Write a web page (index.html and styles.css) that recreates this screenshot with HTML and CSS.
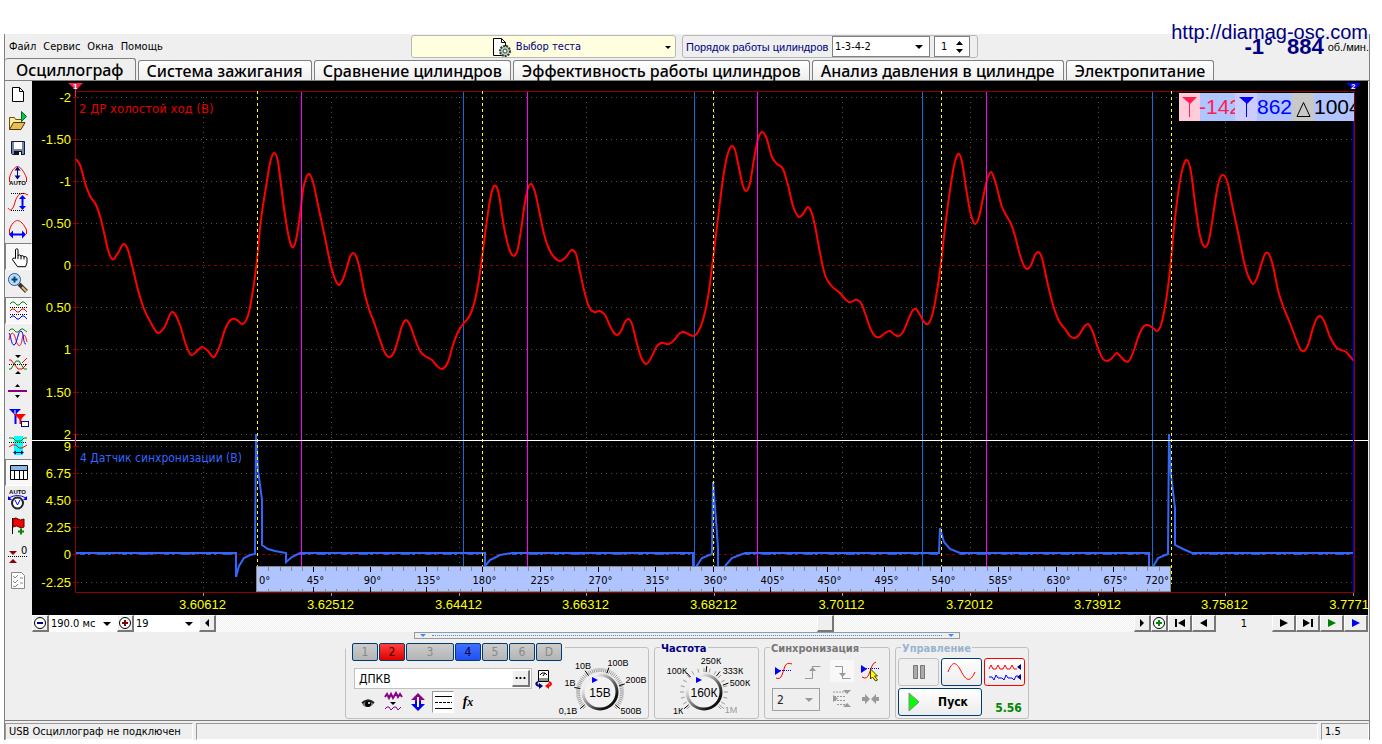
FILE: index.html
```html
<!DOCTYPE html>
<html lang="ru">
<head>
<meta charset="utf-8">
<title>USB Осциллограф</title>
<link rel="stylesheet" href="styles.css">
</head>
<body>
<div class="window">
  <a class="site" href="#">http://diamag-osc.com</a>
  <header class="top">
    <nav class="menu"><a href="#">Файл</a><a href="#">Сервис</a><a href="#">Окна</a><a href="#">Помощь</a></nav>
    <button class="test">
      <svg width="20" height="20" viewBox="0 0 20 20"><path d="M1.500 1.500h8l4 4v13h-12z" fill="#fff" stroke="#000"/><path d="M9.500 1.500v4h4" fill="none" stroke="#000"/><circle cx="13" cy="14" r="5" fill="#b9d0b4" stroke="#2c3c2c" stroke-width="2" stroke-dasharray="2 1"/><circle cx="13" cy="14" r="2" fill="#fff" stroke="#345"/></svg>
      <span>Выбор теста</span><i class="tri"></i>
    </button>
    <div class="order">
      <label for="order">Порядок работы цилиндров</label>
      <span class="pick order-pick"><select id="order"><option>1-3-4-2</option></select></span>
      <span class="spin"><input aria-label="Цилиндр" value="1"><svg width="9" height="14" viewBox="0 0 9 14"><path d="M1 5L4.500 1L8 5zM1 9L4.500 13L8 9z"/></svg></span>
    </div>
    <div class="rpm"><b>-1°</b><b>884</b><span>об./мин.</span></div>
  </header>
  <div class="tabs" role="tablist">
    <button class="tab active" role="tab">Осциллограф</button><button class="tab" role="tab">Система зажигания</button><button class="tab" role="tab">Сравнение цилиндров</button><button class="tab" role="tab">Эффективность работы цилиндров</button><button class="tab" role="tab">Анализ давления в цилиндре</button><button class="tab" role="tab">Электропитание</button>
  </div>
  <main class="main">
    <aside class="tools">
      <button aria-label="Новый"><svg viewBox="1 0 27 27"><path d="M8.500 6.500h7l4 4v10h-11z" fill="#fff" stroke="#000"/><path d="M15.500 6.500v4h4" fill="none" stroke="#000"/></svg></button>
      <button aria-label="Открыть"><svg viewBox="1 0 27 27"><path d="M5.500 21.500v-12h5l1 2h6v3" fill="#ffe9a0" stroke="#6b5200"/><path d="M5.500 21.500l4-7h11.500l-4 7z" fill="#e8bd58" stroke="#4a3800"/><path d="M17.500 3.500l5 5l-5 5z" fill="#0c3" stroke="#063"/></svg></button>
      <button aria-label="Сохранить"><svg viewBox="1 0 27 27"><path d="M7.500 6.500h13v13h-12l-1-1z" fill="#7285ad" stroke="#111a3a"/><path d="M10 7h8v7h-8z" fill="#fff"/><path d="M10 16h8v4h-8z" fill="#111"/><path d="M15 17h2v3h-2z" fill="#fff"/></svg></button>
      <button aria-label="Авто масштаб"><svg viewBox="1 0 27 27"><path d="M5.500 20v-4C7 9 11 4.500 13.500 4.500S20 9 22.500 16v4" class="r"/><path d="M13.500 6v11" stroke="#008"/><path d="M10.500 8.500l3-4l3 4zM10.500 13.500l3 4l3-4z" fill="#008"/><text x="13.500" y="23" class="auto">AUTO</text></svg></button>
      <button aria-label="Масштаб по вертикали"><svg viewBox="1 0 27 27"><path d="M4 19c3 5 6-1 7-6c2-7 6-11 13-7" class="r"/><path d="M7 4.500h14M7 21.500h14" class="dot"/><path d="M18.500 8v11" stroke="#00f" stroke-width="2"/><path d="M15 10l3.500-4l3.500 4zM15 17l3.500 4l3.500-4z" fill="#00f"/></svg></button>
      <button aria-label="Масштаб по горизонтали"><svg viewBox="1 0 27 27"><path d="M5.500 18v-4C7 8 11 4.500 13.500 4.500S20 8 22.500 14v4" class="r"/><path d="M7 18.500h13" stroke="#00f" stroke-width="2"/><path d="M5 18.500l4-4v8zM22 18.500l-4-4v8z" fill="#00f"/></svg></button>
      <button class="on" aria-label="Рука"><svg viewBox="1 0 27 27"><path d="M11.500 15.500v-9q1.500-1.500 2.500 0v6q2-1.500 3 .5q2-1 3 .7q2-.5 3 1v5l-1.500 4h-8l-5-7q0-2 2-1.500z" fill="#fff" stroke="#000"/><path d="M14 12v4M17 12.500v4M20 13.500v3" stroke="#000"/></svg></button>
      <button aria-label="Увеличить"><svg viewBox="1 0 27 27"><path d="M15 14l7.500 7.500" stroke="#333" stroke-width="4"/><path d="M18 17l4.500 4.500" stroke="#e0c060" stroke-width="2"/><circle cx="10.500" cy="9.500" r="6" fill="#b8dcff" stroke="#335a8c"/><path d="M7.500 9.500h6M10.500 6.500v6" stroke="#046" stroke-width="2"/></svg></button>
      <button class="on" aria-label="Раздельно"><svg viewBox="1 0 27 27"><path d="M6 7l2-2h2l3 3h2l3-3h2l3 3" class="g"/><path d="M6 14l2-2h2l3 3h2l3-3h2l3 3" class="r"/><path d="M6 21l2-2h2l3 3h2l3-3h2l3 3" class="b"/><path d="M6 10.500h18M6 17.500h18" class="dot"/></svg></button>
      <button aria-label="Совместно"><svg viewBox="1 0 27 27"><path d="M5 7l2-2h2l3 3h2l3-3h2l4 3" class="g"/><path d="M5 16c2-10 5-8 7 0s5 7 6 0s3-7 5 2" class="r"/><path d="M5 9c2 2 2 12 5 12s4-15 7-14s2 14 5 13" class="b"/></svg></button>
      <button aria-label="Центр"><svg viewBox="1 0 27 27"><path d="M5 9h2l7 9h4l5-5" class="r"/><path d="M5 18h2l5-8h3l5 8h3" class="g"/><path d="M5 13.500h18" class="dot"/><path d="M11 4h6l-3 3zM11 23h6l-3-3z"/><path d="M18 12l5-5" class="r"/></svg></button>
      <button aria-label="Разделитель"><svg viewBox="1 0 27 27"><path d="M4 13h19" stroke="#808" stroke-width="2"/><path d="M11 9h5l-2.500-3zM11 17h5l-2.500 3z"/></svg></button>
      <button aria-label="Маркеры"><svg viewBox="1 0 27 27"><path d="M5 4h12l-6 6z" fill="#00f"/><path d="M11.500 5v14" stroke="#00f" stroke-width="2"/><path d="M10 9h12l-6 6z" fill="#f00"/><path d="M16.500 10v9" stroke="#f00" stroke-width="2"/><path d="M11 5v4" stroke="#fff"/><rect x="17.500" y="16.500" width="7" height="5" fill="#fff" stroke="#008"/></svg></button>
      <button aria-label="Область"><svg viewBox="1 0 27 27"><path d="M10 4h9v19h-9z" fill="#0ff"/><path d="M5 6h4l3 3h5l3-3h3" class="g"/><path d="M5 15l3-2h4l3 3h3l5-3" class="r"/><path d="M5 10.500h18" class="dot"/><path d="M10 20.500h9" stroke="#008"/><path d="M9 20.500l3-2v4zM20 20.500l-3-2v4z" fill="#008"/></svg></button>
      <button class="on" aria-label="Таблица"><svg viewBox="1 0 27 27"><path d="M6.500 6.500h17v14h-17z" fill="#fff" stroke="#000"/><path d="M7 7h16v4h-16z" fill="#8cb8e8"/><path d="M6 11.500h18M10.500 11v9M15.500 11v9M19.500 11v9" stroke="#000"/></svg></button>
      <button aria-label="Авто вольт"><svg viewBox="1 0 27 27"><text x="13.500" y="8" class="auto">AUTO</text><circle cx="13.500" cy="17" r="5.500" fill="#fff" stroke="#222" stroke-width="2"/><path d="M11 14l2.500 5l2.500-5M5 12q8-5 17 0" class="b"/><path d="M4 10v4h4zM23 10v4h-4z" fill="#00f"/></svg></button>
      <button aria-label="Флаг"><svg viewBox="1 0 27 27"><path d="M8.500 5v16" stroke="#000"/><path d="M9 6q3-2 5 0t6 0v8q-3 2-5 0t-6 0z" fill="#e00" stroke="#600"/><path d="M14 18.500h6M17 15.500v6" stroke="#080" stroke-width="2"/></svg></button>
      <button aria-label="Ноль"><svg viewBox="1 0 27 27"><path d="M5 11h8l-4 4zM5 23h8l-4-4z" fill="#800"/><path d="M4 16.500h20" class="dot"/><text x="17" y="14" font-size="11">0</text></svg></button>
      <button aria-label="Список"><svg viewBox="1 0 27 27"><path d="M7.500 5.500h10l3 3v13h-13z" fill="#fff" stroke="#888"/><path d="M9 9l2 2l3-3M9 14l2 2l3-3M9 19l2 1l3-3M16 11h3M16 16h3" fill="none" stroke="#888"/></svg></button>
    </aside>
    <section class="view">
      <svg class="chart" id="chart" viewBox="32 81 1336 534" role="img" aria-label="Осциллограмма"></svg>
      <div class="scroll">
        <button class="sq" aria-label="Меньше"><svg width="14" height="14"><circle cx="7" cy="7" r="5.500" fill="#fff" stroke="#000"/><path d="M4 7h6" stroke="#008" stroke-width="2"/></svg></button>
        <span class="pick time"><select aria-label="Развёртка"><option>190.0 мс</option></select></span>
        <button class="sq" aria-label="Больше"><svg width="14" height="14"><circle cx="7" cy="7" r="5.500" fill="#fff" stroke="#000"/><path d="M4 7h6M7 4v6" stroke="#800" stroke-width="2"/></svg></button>
        <span class="pick count"><select aria-label="Делений"><option>19</option></select></span>
        <button class="sq" aria-label="Влево"><svg width="6" height="8"><path d="M5 0v8L1 4z"/></svg></button>
        <div class="track"><div class="gap-left"></div><div class="thumb"></div></div>
        <button class="sq" aria-label="Вправо"><svg width="6" height="8"><path d="M1 0v8l4-4z"/></svg></button>
        <button class="sq" aria-label="Добавить"><svg width="14" height="14"><circle cx="7" cy="7" r="5.500" fill="#fff" stroke="#000"/><path d="M4 7h6M7 4v6" stroke="#080" stroke-width="2"/></svg></button>
        <button class="wide" aria-label="В начало"><svg width="12" height="8"><path d="M1 0h2v8h-2zM11 0v8L4 4z"/></svg></button>
        <button class="wide" aria-label="Назад"><svg width="12" height="8"><path d="M9 0v8L2 4z"/></svg></button>
        <output class="page">1</output>
        <button class="wide" aria-label="Вперёд"><svg width="12" height="8"><path d="M2 0v8l8-4z"/></svg></button>
        <button class="wide" aria-label="В конец"><svg width="12" height="8"><path d="M1 0v8l7-4zM9 0h2v8h-2z"/></svg></button>
        <button class="wide" aria-label="Воспроизвести"><svg width="12" height="8"><path d="M2 0v8l8-4z" fill="#008000"/></svg></button>
        <button class="wide" aria-label="Старт"><svg width="12" height="8"><path d="M2 0v8l8-4z" fill="#00f"/></svg></button>
      </div>
    </section>
  </main>
  <div class="splitter"><i></i><span></span><i></i></div>
  <div class="panels">
    <section class="group channels">
      <div class="chan"><button>1</button><button class="red">2</button><button class="big">3</button><button class="blue">4</button><button>5</button><button>6</button><button>D</button></div>
      <div class="chan-body">
        <div class="chan-left">
          <div class="row"><div class="field"><input aria-label="Датчик" value="ДПКВ"><button>...</button></div>
            <button class="plain" aria-label="Заменить"><svg width="20" height="20"><path d="M4.500 1.500h10v11h-10z" fill="#fff" stroke="#000"/><path d="M5 9h9v3h-9z" fill="#8a9a8a"/><path d="M6 6l2-2h3l2 2M9 7l2-3" fill="none" stroke="#000"/><path d="M4 13q-4 2 1 4" fill="none" stroke="#008" stroke-width="2"/><path d="M5 14v6l4-3z" fill="#008"/><path d="M15 13q4 2 0 4" fill="none" stroke="#f00" stroke-width="2"/><path d="M15 14v6l-4-3z" fill="#f00"/></svg></button></div>
          <div class="icons">
            <button class="plain" aria-label="Видимость"><svg width="22" height="22"><path d="M5 12q6-7 12-1q-1 5-7 5q-4 0-5-4z" fill="#777"/><path d="M5 12q6-5 12 0" fill="none" stroke="#222" stroke-width="2"/><circle cx="11" cy="13" r="3"/><circle cx="12" cy="12" r="1" fill="#fff"/></svg></button>
            <button class="plain" aria-label="Фильтр"><svg width="22" height="22"><path d="M3 6l2-3l2 4l2-4l2 4l3-5l2 4l2-3l2 3" fill="none" stroke="#808" stroke-width="2"/><path d="M8 11h6l-3 3z"/><path d="M3 18l2-2h2l2 3l3-3h2l2 3l3-3" fill="none" stroke="#808"/></svg></button>
            <button class="plain" aria-label="Сдвиг"><svg width="22" height="22"><path d="M11 2l7 7h-4v3h-6v-3h-4z" fill="#808"/><path d="M11 20l7-7h-4v-3h-6v3h-4z" fill="#00f"/><path d="M11 6v10" stroke="#fff" stroke-width="2"/></svg></button>
            <button class="plain pressed" aria-label="Линии"><svg width="22" height="22"><path d="M3 5.500h17M3 17.500h17" stroke="#000"/><path d="M3 11.500h17" stroke="#000" stroke-dasharray="3 1"/></svg></button>
            <button class="plain fx">f<small>x</small></button>
          </div>
        </div>
        <svg class="dial" id="volts" width="92" height="66" viewBox="557 653 92 66"></svg>
      </div>
    </section>
    <section class="group freq"><h2>Частота</h2><svg class="dial" id="freq" width="92" height="66" viewBox="662 653 92 66"></svg></section>
    <section class="group sync"><h2>Синхронизация</h2>
      <div class="sync-grid">
        <button class="plain" aria-label="Уровень"><svg width="24" height="22"><path d="M4 18q4 2 6-3l3-9q2-4 7-2" class="r"/><path d="M4 10.500h16" stroke="#00f" stroke-dasharray="1 1"/><path d="M3 7l6 4l-6 4z" fill="#00f"/></svg></button>
        <button class="plain" disabled aria-label="Фронт"><svg width="24" height="22"><path d="M4 18.500h7.500v-12h8M11.500 6v12" fill="none" stroke="#999"/><path d="M8 11h7l-3.500-4z" fill="#999"/></svg></button>
        <button class="plain sel" disabled aria-label="Спад"><svg width="24" height="22"><path d="M5 6.500h7.500v12h8" fill="none" stroke="#999"/><path d="M9 13h7l-3.500 4z" fill="#999"/></svg></button>
        <button class="plain" aria-label="Указать"><svg width="24" height="22"><path d="M3 17q5 3 7-3l3-8q1-3 4-4" class="r"/><path d="M3 8.500h17" stroke="#00f" stroke-dasharray="1 1"/><path d="M2 5l6 4l-6 4z" fill="#00f"/><path d="M11.500 9v10l2-2l3 4l2-1l-3-4h3z" fill="#ff0" stroke="#440"/></svg></button>
        <span class="pick chansel"><select disabled aria-label="Канал"><option>2</option></select></span>
        <button class="plain" disabled aria-label="Окно"><svg width="24" height="22"><path d="M3 4h14M4 8.500h12M4 12.500h12M7 16.500h9" stroke="#999" stroke-dasharray="2 1"/><path d="M13 2h8l-4 4zM13 19h8l-4-4zM3 7v7l5-3.500z" fill="#999"/></svg></button>
        <button class="plain" disabled aria-label="Сжать"><svg width="24" height="22"><path d="M3 9h3v-3l5 5l-5 5v-3h-3zM20 9h-3v-3l-5 5l5 5v-3h3z" fill="#999"/></svg></button>
      </div>
    </section>
    <section class="group ctrl"><h2>Управление</h2>
      <div class="ctrl-grid">
        <button class="cb off" disabled aria-label="Пауза"><svg width="14" height="16"><path d="M1.500 1.500h4v13h-4zM8.500 1.500h4v13h-4z" fill="#aaa" stroke="#777"/></svg></button>
        <button class="cb" aria-label="Кадр"><svg width="32" height="22"><path d="M2 11C6 0 10 0 15 10s9 12 14 1" class="r"/></svg></button>
        <button class="cb redb" aria-label="Поток"><svg width="36" height="22"><path d="M2 8l2-4l2 4h3l2-4l2 4h3l2-4l2 4h3l2-4l2 4h3" class="r"/><path d="M2 16h3l2 3l2-5l2 3h4l2 2l2-5l2 3h4l2 2l2-4h2" class="b"/><path d="M34 3v6l-4-3zM34 13v6l-4-3z" fill="#008"/></svg></button>
        <button class="cb go"><svg width="12" height="20"><path d="M1 1l10 9l-10 9z" fill="#0f0" stroke="#888"/></svg><span>Пуск</span></button>
        <output class="ver">5.56</output>
      </div>
    </section>
  </div>
  <footer class="status"><span>USB Осциллограф не подключен</span><span></span><span>1.5</span></footer>
</div>
<script src="script.js"></script>
</body>
</html>
```
FILE: styles.css
```css
* { box-sizing: border-box; }
body { margin: 0; padding-top: 34px; background: #fff; font: 11px/14px "DejaVu Sans Condensed", "DejaVu Sans", sans-serif; color: #000; }
button, input, select { font: inherit; color: inherit; margin: 0; padding: 0; border: 0; background: none; border-radius: 0; }
button { display: flex; align-items: center; justify-content: center; }
select { appearance: none; width: 100%; height: 100%; opacity: 1; }
svg { display: block; flex: none; }
.r { fill: none; stroke: #f00; }
.g { fill: none; stroke: #080; }
.b { fill: none; stroke: #00f; }
.dot { stroke: #000; stroke-dasharray: 1 1; }
.auto { font: bold 6px "Liberation Sans", sans-serif; text-anchor: middle; }

.window { position: relative; margin: 0 12px 0 4px; background: #efefef; border-left: 1px solid #808080; border-right: 1px solid #808080; }
.site { position: absolute; right: 1px; top: -14px; font: 20px/24px "Liberation Sans", Arial, sans-serif; color: #000080; text-decoration: none; z-index: 1; }
.top { display: flex; height: 25px; align-items: center; }
.menu { display: flex; gap: 7px; width: 406px; padding-left: 4px; }
.menu a { color: #000; text-decoration: none; }
.test { position: relative; width: 265px; height: 23px; gap: 4px; padding-right: 14px; background: #ffffdf; border: 1px solid #b8b8b8; border-radius: 3px; color: #000080; }
.test .tri { position: absolute; right: 4px; top: 10px; border: 3px solid transparent; border-top-color: #000; border-bottom: 0; }
.order { display: flex; align-items: center; gap: 4px; width: 296px; height: 23px; margin-left: 6px; padding-left: 3px; border: 1px solid #b8b8b8; border-radius: 3px; color: #000080; white-space: nowrap; }
.order label { width: 142px; font-family: "Liberation Sans", Arial, sans-serif; }
.pick { position: relative; display: block; background: #fff; color: #000; }
.pick::after { content: ""; position: absolute; right: 6px; top: 50%; margin-top: -2px; border: 4px solid transparent; border-top-color: #000; border-bottom: 0; }
.pick select { padding-left: 2px; }
.order-pick { width: 98px; height: 21px; border: 1px solid #808080; }
.spin { display: flex; align-items: center; width: 36px; height: 21px; padding: 0 4px 0 6px; border: 1px solid #808080; background: #fff; }
.spin input { width: 14px; color: #000; }
.rpm { display: flex; align-items: center; margin-left: auto; color: #000080; white-space: nowrap; }
.rpm b { font: bold 22px/24px "Liberation Sans", Arial, sans-serif; margin-right: 14px; }
.rpm b + b { margin-right: 4px; }
.rpm span { color: #000; font: 11px/14px "Liberation Sans", Arial, sans-serif; }

.tabs { display: flex; align-items: flex-end; height: 22px; border-bottom: 1px solid #808080; gap: 2px; }
.tab { height: 20px; padding: 0 8px; border: 1px solid #808080; border-bottom: 0; border-radius: 3px 3px 0 0; background: linear-gradient(#fff, #efefef); font: 500 16px/20px "Noto Sans", sans-serif; white-space: nowrap; }
.tab.active { height: 22px; padding: 0 11px; background: #efefef; border-left: 0; }
.main { display: flex; align-items: stretch; }
.tools { flex: 0 0 27px; }
.tools button { width: 27px; height: 27px; }
.tools button svg { width: 27px; height: 27px; }
.tools .on { background: #f8f8f8; border: 1px solid #fff; border-top-color: #808080; border-left-color: #808080; }
.view { flex: 1; min-width: 0; padding-right: 1px; background: #efefef; }
.chart { width: 100%; height: auto; background: #000; }
.chart text { font-family: "Liberation Sans", Arial, sans-serif; font-size: 13px; }
.chart .title { font-family: "DejaVu Sans Condensed", sans-serif; font-size: 13px; }
.chart .small { font-size: 12px; }
.chart .deg { font-family: "DejaVu Sans Condensed", sans-serif; font-size: 11px; }
.chart .num { font-size: 21px; }
.chart .flag { font-size: 8px; font-weight: bold; fill: #fff; }

.scroll { display: flex; height: 17px; background: #efefef; }
.sq, .wide, .thumb, .field button { background: #efefef; border: 1px solid #fff; border-right: 2px solid #777; border-bottom: 2px solid #777; }
.sq { flex: 0 0 17px; }
.wide { flex: 0 0 24px; }
.time { flex: 0 0 68px; }
.count { flex: 0 0 65px; }
.track { flex: 1; display: flex; background: repeating-conic-gradient(#fff 0 25%, #efefef 0 50%) 0 0 / 2px 2px; }
.gap-left { width: 65.500%; }
.thumb { width: 17px; }
.page { flex: 0 0 56px; text-align: center; line-height: 17px; }

.splitter { display: flex; align-items: center; gap: 6px; width: 546px; height: 7px; margin: 0 auto; padding: 0 5px; border: 1px solid #999; }
.splitter i { border: 3px solid transparent; border-top-color: #3090ff; border-bottom: 0; }
.splitter span { flex: 1; border-top: 1px dotted #3090ff; }
.panels { display: flex; justify-content: center; gap: 5px; padding: 8px 0 1px; border-bottom: 1px solid #808080; }
.group { height: 72px; border: 1px solid #c0c0c0; border-radius: 3px; }
.group h2 { width: max-content; margin: -6px 0 0 5px; padding: 0 1px; font-size: 11px; line-height: 14px; background: #efefef; color: #000080; }
.channels { width: 304px; }
.freq { width: 105px; }
.sync { width: 126px; }
.ctrl { width: 134px; }
.chan { display: flex; gap: 1px; width: 219px; margin-top: -5px; padding-left: 6px; background: #efefef; }
.chan button { width: 26px; height: 18px; border: 1px solid #003c74; border-radius: 2px; background: linear-gradient(#ccc, #b4b4b4); color: #888; font-size: 12px; }
.chan .big { width: 48px; }
.chan .red { background: linear-gradient(#ff4040, #e00000); color: #400; }
.chan .blue { background: linear-gradient(#4070ff, #2050f0); color: #003; }
.chan-body { display: flex; gap: 3px; padding-left: 8px; }
.chan-left { width: 200px; padding-top: 7px; }
.row { display: flex; gap: 2px; align-items: center; height: 21px; }
.field { display: flex; width: 178px; height: 21px; padding: 1px; border: 1px solid #c0c0c0; background: #fff; }
.field input { flex: 1; min-width: 0; padding-left: 3px; font-size: 12px; }
.field button { width: 18px; font-weight: bold; line-height: 8px; padding-bottom: 4px; }
.icons { display: flex; gap: 3px; padding: 2px 0 0 3px; }
.icons .plain { width: 22px; height: 22px; }
.pressed { background: #fff; border: 1px solid #fff; border-top-color: #999; border-left-color: #999; }
.fx { font: italic bold 14px "Liberation Serif", serif; }
.fx small { font-size: 12px; }
.channels .dial { margin-top: -8px; }
.dial text { font: 9px "Liberation Sans", Arial, sans-serif; text-anchor: middle; }
.dial .val { font-size: 12px; }
.freq .dial { margin: -3px 0 0 7px; }
.sync h2 { color: #777; }
.sync-grid { display: grid; grid-template-columns: 29px 29px 29px 24px; padding: 4px 0 0 7px; row-gap: 6px; }
.sync-grid .plain { width: 24px; height: 22px; }
.sel { background: #f8f8f8; }
.chansel { grid-column: span 2; width: 48px; height: 23px; border: 1px solid #a0a0a0; background: #efefef; }
.chansel::after { border-top-color: #999; }
.chansel select { padding-left: 4px; color: #222; font-size: 12px; opacity: 1; }
.ctrl h2 { color: #99b4d1; }
.ctrl-grid { display: grid; grid-template-columns: 41px 41px 41px; gap: 2px; padding: 2px 0 0 2px; }
.cb { height: 28px; border: 1px solid #003c74; border-radius: 3px; background: linear-gradient(#fff, #ececec); }
.off { border-color: #c0c0c0; background: #efefef; }
.redb { border-color: #f00; }
.go { grid-column: span 2; gap: 18px; padding-right: 4px; font-weight: bold; font-size: 12px; }
.ver { align-self: end; text-align: center; padding-left: 8px; font: bold 12px/16px "DejaVu Sans Condensed", sans-serif; color: #080; }
.status { display: flex; gap: 3px; margin-top: 2px; height: 17px; }
.status span { padding: 1px 3px; border: 1px solid #fff; border-top-color: #999; border-left-color: #999; }
.status span:nth-child(1) { width: 188px; }
.status span:nth-child(2) { flex: 1; }
.status span:nth-child(3) { width: 48px; }
```
FILE: script.js
```js
const NS = 'http://www.w3.org/2000/svg';
function add(parent, tag, attrs, text) {
  const el = document.createElementNS(NS, tag);
  for (const k in attrs) el.setAttribute(k, attrs[k]);
  if (text !== undefined) el.textContent = text;
  parent.appendChild(el);
  return el;
}
const line = (p, x1, y1, x2, y2, stroke, dash) =>
  add(p, 'path', { d: `M${x1} ${y1}L${x2} ${y2}`, stroke, fill: 'none', 'stroke-dasharray': dash || 'none' });

const pressure = [76,159,80,165,86,186,90,196,96,205,100,216,105,237,108,250,112,259,118,253,124,244,128,250,132,265,138,290,144,309,151,323,158,333,164,328,172,312,180,325,186,345,191,355,196,352,202,347,208,351,214,357,219,348,226,327,232,319,237,320,243,324,249,312,253,290,257,260,260,228,266,187,270,163,274,153,278,162,281,185,285,215,289,238,292,247,296,240,300,215,303,190,306,178,309,174,313,182,318,205,324,233,331,266,335,279,339,285,343,279,347,267,350,257,353,253,356,256,360,270,365,295,369,309,375,325,380,340,385,353,390,357,394,352,398,340,402,326,406,320,410,325,415,339,420,351,425,356,432,360,437,366,442,369,448,362,453,345,458,332,463,324,470,315,474,304,478,285,482,258,486,227,490,200,493,188,496,186,499,195,502,215,506,237,510,251,514,256,518,248,521,230,525,202,528,188,531,184,535,192,539,210,544,234,549,249,554,257,560,261,566,257,572,250,576,254,580,272,584,290,589,307,594,312,600,311,605,315,610,326,614,333,617,335,621,331,625,322,628,319,632,324,636,340,641,357,646,364,651,358,657,346,661,343,669,344,675,339,680,333,684,332,690,335,694,336,698,332,703,320,708,297,712,267,715,243,719,210,724,172,728,153,732,146,735,150,739,168,743,186,746,191,750,183,754,159,758,139,762,132,766,137,772,157,777,164,783,169,788,185,793,206,797,215,799,217,803,214,808,207,811,211,815,226,820,253,825,275,830,284,841,294,846,300,849,302,857,300,861,303,866,316,871,330,875,336,880,337,885,333,890,331,895,335,899,336,903,332,909,318,913,310,916,309,920,315,924,322,928,324,932,316,936,297,941,263,945,228,950,190,954,166,959,154,962,162,966,188,971,215,975,224,979,217,983,198,987,180,991,172,995,181,1002,207,1006,215,1011,224,1015,236,1020,255,1024,266,1027,269,1031,265,1035,255,1038,252,1042,258,1047,281,1053,305,1059,321,1065,329,1070,336,1075,338,1079,335,1084,327,1088,324,1092,330,1098,348,1103,359,1107,361,1112,358,1117,353,1121,357,1125,361,1129,361,1134,350,1139,335,1144,326,1148,325,1153,328,1157,331,1161,325,1165,307,1170,270,1174,228,1179,187,1183,167,1187,160,1191,172,1195,203,1200,236,1203,245,1205,247,1209,240,1213,216,1217,190,1220,178,1223,175,1227,181,1233,209,1239,237,1245,266,1250,280,1253,284,1257,278,1262,262,1265,254,1268,253,1272,262,1278,290,1283,306,1290,323,1296,339,1301,350,1304,351,1308,345,1313,328,1317,318,1320,316,1324,321,1330,337,1336,347,1346,352,1354,361];

const pulses = 'M76 553H236V577L239 566L244 558L250 555L255 554L256 434L258 470L262 500V545L268 549L275 551L286 553V562L292 557L300 553H485V566L490 560L500 555L512 553H693V567M696 567L702 558L712 554L713 482L716 520L718 548V567M725 566L732 558L745 553H939L940 528L944 542L950 549L960 553H1149V567M1153 567L1158 558L1168 554L1169 434L1171 475L1175 508V545L1183 549L1192 553H1353';

function smooth(a) {
  const n = a.length / 2, X = i => a[2 * i], Y = i => a[2 * i + 1], m = [];
  const s = i => (Y(i + 1) - Y(i)) / (X(i + 1) - X(i));
  for (let i = 0; i < n; i++) {
    if (i === 0) m.push(s(0));
    else if (i === n - 1) m.push(s(n - 2));
    else {
      const p = s(i - 1), q = s(i), l = X(i) - X(i - 1), r = X(i + 1) - X(i);
      m.push((p * r + q * l) / (l + r));
    }
  }
  let d = `M${X(0)} ${Y(0)}`;
  for (let i = 1; i < n; i++) {
    const h = (X(i) - X(i - 1)) / 3;
    d += `C${X(i - 1) + h} ${Y(i - 1) + m[i - 1] * h} ${X(i) - h} ${Y(i) - m[i] * h} ${X(i)} ${Y(i)}`;
  }
  return d;
}

const c = document.getElementById('chart');
const rows = [[97,'-2'],[139,'-1.50'],[181,'-1'],[223,'-0.50'],[265,'0'],[307,'0.50'],[349,'1'],[392,'1.50'],[434,'2'],[446,'9'],[473,'6.75'],[500,'4.50'],[527,'2.25'],[554,'0'],[582,'-2.25']];
for (const [y, t] of rows) {
  line(c, 76, y + .5, 1354, y + .5, t === '0' ? '#800000' : '#505050', t === '0' ? '3 3' : '1 4');
  line(c, 73, y + .5, 79, y + .5, '#900000');
  add(c, 'text', { x: 71, y: y + 5, fill: '#ff0', 'text-anchor': 'end' }, t);
}
['3.60612','3.62512','3.64412','3.66312','3.68212','3.70112','3.72012','3.73912','3.75812','3.7771'].forEach((t, i) => {
  const x = Math.round(203 + 127.8 * i) + .5;
  if (i < 9) line(c, x, 97, x, 592, '#505050', '1 4');
  line(c, x, 592, x, 596, '#999');
  add(c, 'text', { x: i < 9 ? x - 1 : 1369, y: 609, fill: '#ff0', 'text-anchor': i < 9 ? 'middle' : 'end' }, t);
});
add(c, 'path', { d: 'M75.5 91.5H1354.500V592.500H75.500z', fill: 'none', stroke: '#900000' });
add(c, 'text', { x: 79, y: 113, fill: '#e00000', class: 'title' }, '2 ДР холостой ход (В)');
add(c, 'text', { x: 80, y: 462, fill: '#3366ff', class: 'title small' }, '4 Датчик синхронизации (В)');
for (const x of [463, 694, 922, 1152]) line(c, x + .5, 92, x + .5, 567, '#0a6fd8');
add(c, 'path', { d: smooth(pressure), fill: 'none', stroke: '#f00', 'stroke-width': 2 });
add(c, 'path', { d: pulses, fill: 'none', stroke: '#3366ff', 'stroke-width': 2 });
add(c, 'path', { d: 'M80 554.500H234M300 554.500H484M512 554.500H692M745 554.500H938M960 554.500H1148M1192 554.500H1353', fill: 'none', stroke: '#2c55c8', 'stroke-dasharray': '5 3 2 7 9 2 3 11' });
for (const x of [301, 527, 757, 986]) line(c, x + .5, 92, x + .5, 567, '#f0f');
for (const x of [257, 482, 713, 941, 1171]) line(c, x + .5, 91, x + .5, x === 1171 ? 584 : 567, '#ff0', '3 3');
line(c, 32, 440.5, 1368, 440.5, '#fff');

// Crank angle ruler
add(c, 'rect', { x: 256.5, y: 566.5, width: 914, height: 25, fill: '#b0c4ff', stroke: '#888' });
const knots = [257, 482, 713, 941, 1170];
for (let k = 1; k < 80; k++) {
  const f = Math.floor(k / 20), x = Math.round(knots[f] + (knots[f + 1] - knots[f]) * (k % 20) / 20) + .5;
  const major = k % 5 === 0;
  line(c, x, 567, x, major ? 572 : 571, major ? '#000' : '#888');
  line(c, x, major ? 587 : 589, x, 592, major ? '#000' : '#888');
  if (major) add(c, 'text', { x: x + 2, y: 584, 'text-anchor': 'middle', class: 'deg' }, k * 9 + '°');
}
add(c, 'text', { x: 259, y: 584, class: 'deg' }, '0°');
add(c, 'text', { x: 1169, y: 584, 'text-anchor': 'end', class: 'deg' }, '720°');

// Marker read-outs
line(c, 1353.5, 92, 1353.5, 592, '#00f');
[[1179, 21, '#ffccdc'], [1200, 35, '#b0c4ff'], [1235, 22, '#ccccff'], [1257, 35, '#b0c4ff'], [1292, 22, '#c8c8c8'], [1314, 40, '#b0c4ff']]
  .forEach(([x, width, fill]) => add(c, 'rect', { x, y: 93, width, height: 28, fill }));
[[1199, 36, '-142', '#ff2050'], [1257, 35, '862', '#00f'], [1314, 40, '1004', '#000']].forEach(([x, w, t, fill]) => {
  const s = add(c, 'svg', { x, y: 93, width: w, height: 28 });
  add(s, 'text', { x: 0, y: 21, fill, class: 'num' }, t);
});
add(c, 'path', { d: 'M1182 97h15l-7 7zM1189 103h1v14h-1z', fill: '#ff2050' });
add(c, 'path', { d: 'M1239 97h15l-7 7zM1246 103h1v14h-1z', fill: '#00f' });
add(c, 'path', { d: 'M1303.500 102.500l6.500 14h-13z', fill: 'none', stroke: '#000' });
add(c, 'path', { d: 'M68 83h15l-7 7z', fill: '#ff2050' });
add(c, 'path', { d: 'M1346 83h15l-7 7z', fill: '#00f' });
add(c, 'text', { x: 73, y: 89, class: 'flag' }, '1');
add(c, 'text', { x: 1351, y: 89, class: 'flag' }, '2');
line(c, 75.5, 89, 75.5, 97, '#ff2050');
line(c, 75.5, 434, 75.5, 446, '#ff2050');

function dial(id, cx, value, labels, long) {
  const s = document.getElementById(id), cy = 692;
  const g = add(add(s, 'defs', {}), 'linearGradient', { id: id + 'g', x1: 0, y1: 0, x2: 1, y2: 1 });
  add(g, 'stop', { offset: .2, 'stop-color': '#eee' });
  add(g, 'stop', { offset: .8, 'stop-color': '#111' });
  const n = long ? 54 : 18;
  for (let i = 0; i <= n; i++) {
    const a = (-225 + 270 * i / n) * Math.PI / 180;
    line(s, cx + 20 * Math.cos(a), cy + 20 * Math.sin(a), cx + 24 * Math.cos(a), cy + 24 * Math.sin(a), '#999');
  }
  add(s, 'circle', { cx, cy, r: 17, fill: '#f2f2f2', stroke: `url(#${id}g)`, 'stroke-width': 3 });
  add(s, 'path', { d: `M${cx - 8} ${cy - 15}l6 3l-6 3z`, fill: '#00f' });
  add(s, 'text', { x: cx, y: cy + 5, class: 'val' }, value);
  for (const [x, y, t, a, fill] of labels) {
    add(s, 'text', { x, y, fill: fill || '#000' }, t);
    const r = a * Math.PI / 180;
    line(s, cx + 20 * Math.cos(r), cy + 20 * Math.sin(r), cx + 26 * Math.cos(r), cy + 26 * Math.sin(r), fill || '#000');
  }
}
dial('volts', 600, '15В', [[568, 714, '0,1В', 140], [570, 686, '1В', 190], [583, 669, '10В', 235], [618, 666, '100В', 290], [636, 683, '200В', 342], [631, 714, '500В', 40]], true);
dial('freq', 704, '160К', [[678, 714, '1К', 140], [677, 674, '100К', 228], [711, 664, '250К', 276], [733, 674, '333К', 308], [740, 686, '500К', 340], [731, 713, '1М', 40, '#999']], false);
```
